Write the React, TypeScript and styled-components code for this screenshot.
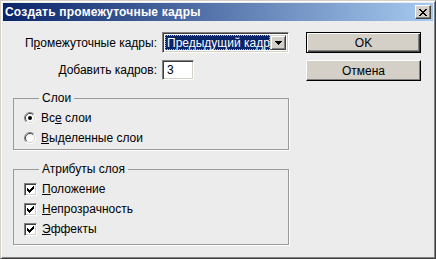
import React from "react";
import styled, { createGlobalStyle } from "styled-components";

const GlobalStyle = createGlobalStyle`
  html, body {
    margin: 0;
    padding: 0;
    background: #ececec;
  }
  body {
    font-family: "Liberation Sans", Arial, sans-serif;
    font-size: 12px;
    color: #000;
  }
`;

const Window = styled.div`
  box-sizing: border-box;
  width: 436px;
  height: 259px;
  display: flex;
  flex-direction: column;
  padding: 2px;
  background: #ececec;
  border-top: 1px solid #d4d0c8;
  border-left: 1px solid #d4d0c8;
  border-right: 1px solid #404040;
  border-bottom: 1px solid #404040;
  box-shadow: inset 1px 1px 0 #ffffff, inset -1px -1px 0 #808080;
`;

const TitleBar = styled.div`
  height: 18px;
  display: flex;
  align-items: center;
  justify-content: space-between;
  padding: 0 2px 0 2px;
  background: linear-gradient(to right, #0a246a, #a6caf0);
`;

const Title = styled.span`
  color: #fff;
  font-weight: bold;
  font-size: 12px;
  letter-spacing: 0.2px;
`;

const CloseButton = styled.div`
  box-sizing: border-box;
  width: 16px;
  height: 14px;
  display: flex;
  align-items: center;
  justify-content: center;
  background: #d4d0c8;
  border-top: 1px solid #fff;
  border-left: 1px solid #fff;
  border-right: 1px solid #404040;
  border-bottom: 1px solid #404040;
  box-shadow: inset -1px -1px 0 #808080;
`;

const Body = styled.div`
  flex: 1;
  display: flex;
  gap: 17px;
  padding: 11px 0 0 10px;
`;

const LeftColumn = styled.div`
  width: 276px;
  display: flex;
  flex-direction: column;
`;

const RightColumn = styled.div`
  display: flex;
  flex-direction: column;
  gap: 7px;
`;

const FieldRow = styled.div<{ $top: number }>`
  display: grid;
  grid-template-columns: 144px auto;
  column-gap: 5px;
  align-items: center;
  margin-top: ${({ $top }) => $top}px;
`;

const FieldLabel = styled.label`
  text-align: right;
  white-space: nowrap;
`;

const Key = styled.span`
  text-decoration: underline;
`;

const Sunken = styled.div<{ $w: number; $h: number }>`
  box-sizing: border-box;
  width: ${({ $w }) => $w}px;
  height: ${({ $h }) => $h}px;
  background: #fff;
  border-top: 1px solid #808080;
  border-left: 1px solid #808080;
  border-right: 1px solid #fff;
  border-bottom: 1px solid #fff;
  box-shadow: inset 1px 1px 0 #404040, inset -1px -1px 0 #d4d0c8;
  display: flex;
  align-items: center;
  padding: 2px;
`;

const SelectedValue = styled.div`
  flex: 1;
  height: 100%;
  box-sizing: border-box;
  background: #0a246a;
  color: #fff;
  padding-left: 2px;
  white-space: nowrap;
  overflow: hidden;
  display: flex;
  align-items: center;
  outline: 1px dotted #c9b46a;
  outline-offset: -1px;
`;

const ArrowButton = styled.div`
  box-sizing: border-box;
  width: 16px;
  height: 100%;
  display: flex;
  align-items: center;
  justify-content: center;
  background: #d4d0c8;
  border-top: 1px solid #d4d0c8;
  border-left: 1px solid #d4d0c8;
  border-right: 1px solid #404040;
  border-bottom: 1px solid #404040;
  box-shadow: inset 1px 1px 0 #fff, inset -1px -1px 0 #808080;
`;

const InputText = styled.span`
  padding-left: 2px;
`;

const Button = styled.div<{ $default?: boolean }>`
  box-sizing: border-box;
  width: 115px;
  height: 21px;
  display: flex;
  align-items: center;
  justify-content: center;
  background: #d4d0c8;
  border-top: 1px solid ${({ $default }) => ($default ? "#000" : "#fff")};
  border-left: 1px solid ${({ $default }) => ($default ? "#000" : "#fff")};
  border-right: 1px solid #000;
  border-bottom: 1px solid #000;
  box-shadow: ${({ $default }) =>
    $default
      ? "inset 1px 1px 0 #fff, inset -1px -1px 0 #404040, inset -2px -2px 0 #808080"
      : "inset -1px -1px 0 #808080"};
`;

const Group = styled.fieldset<{ $top: number; $bottom: number }>`
  margin: ${({ $top }) => $top}px 0 0 0;
  padding: 5px 0 ${({ $bottom }) => $bottom}px 10px;
  border: 1px solid #999;
  box-shadow: 1px 1px 0 #fff;
`;

const Legend = styled.legend`
  margin-left: 15px;
  padding: 0 3px;
  line-height: 14px;
`;

const Option = styled.div`
  display: flex;
  align-items: center;
  gap: 5px;
  height: 16px;
  & + & {
    margin-top: 4px;
  }
`;

const CheckBox = styled.div`
  box-sizing: border-box;
  width: 13px;
  height: 13px;
  background: #fff;
  border-top: 1px solid #808080;
  border-left: 1px solid #808080;
  border-right: 1px solid #fff;
  border-bottom: 1px solid #fff;
  box-shadow: inset 1px 1px 0 #404040, inset -1px -1px 0 #d4d0c8;
  position: relative;
`;

const CheckMark = styled.svg`
  position: absolute;
  left: 1px;
  top: 1px;
`;

const CloseGlyph = () => (
  <svg width="8" height="7" viewBox="0 0 8 7" shapeRendering="crispEdges">
    <path
      fill="#000"
      d="M0 0h2v1H0zM6 0h2v1H6zM1 1h2v1H1zM5 1h2v1H5zM2 2h4v1H2zM3 3h2v1H3zM2 4h4v1H2zM1 5h2v1H1zM5 5h2v1H5zM0 6h2v1H0zM6 6h2v1H6z"
    />
  </svg>
);

const DownArrow = () => (
  <svg width="7" height="4" viewBox="0 0 7 4" shapeRendering="crispEdges">
    <path fill="#000" d="M0 0h7v1H0zM1 1h5v1H1zM2 2h3v1H2zM3 3h1v1H3z" />
  </svg>
);

const Radio = ({ checked }: { checked?: boolean }) => (
  <svg width="12" height="12" viewBox="0 0 12 12">
    <circle cx="6" cy="6" r="5.5" fill="#fff" />
    <path d="M2.1 9.9A5.5 5.5 0 0 1 9.9 2.1" fill="none" stroke="#808080" />
    <path d="M9.9 2.1A5.5 5.5 0 0 1 2.1 9.9" fill="none" stroke="#fff" />
    <path d="M2.8 9.2A4.5 4.5 0 0 1 9.2 2.8" fill="none" stroke="#404040" />
    <path d="M9.2 2.8A4.5 4.5 0 0 1 2.8 9.2" fill="none" stroke="#d4d0c8" />
    {checked && <circle cx="6" cy="6" r="2" fill="#000" />}
  </svg>
);

const Check = () => (
  <CheckBox>
    <CheckMark width="9" height="9" viewBox="0 0 9 9" shapeRendering="crispEdges">
      <path
        fill="#000"
        d="M1 3h1v3H1zM2 4h1v3H2zM3 5h1v3H3zM4 4h1v3H4zM5 3h1v3H5zM6 2h1v3H6zM7 1h1v3H7z"
      />
    </CheckMark>
  </CheckBox>
);

export default function App() {
  return (
    <>
      <GlobalStyle />
      <Window>
        <TitleBar>
          <Title>Создать промежуточные кадры</Title>
          <CloseButton>
            <CloseGlyph />
          </CloseButton>
        </TitleBar>
        <Body>
          <LeftColumn>
            <FieldRow $top={0}>
              <FieldLabel>
                П<Key>р</Key>омежуточные кадры:
              </FieldLabel>
              <Sunken $w={127} $h={21}>
                <SelectedValue>Предыдущий кадр</SelectedValue>
                <ArrowButton>
                  <DownArrow />
                </ArrowButton>
              </Sunken>
            </FieldRow>
            <FieldRow $top={7}>
              <FieldLabel>Добавить кадров:</FieldLabel>
              <Sunken $w={32} $h={20}>
                <InputText>3</InputText>
              </Sunken>
            </FieldRow>
            <Group $top={11} $bottom={3}>
              <Legend>Слои</Legend>
              <Option>
                <Radio checked />
                <span>
                  Вс<Key>е</Key> слои
                </span>
              </Option>
              <Option>
                <Radio />
                <span>
                  <Key>В</Key>ыделенные слои
                </span>
              </Option>
            </Group>
            <Group $top={12} $bottom={7}>
              <Legend>Атрибуты слоя</Legend>
              <Option>
                <Check />
                <span>
                  <Key>П</Key>оложение
                </span>
              </Option>
              <Option>
                <Check />
                <span>
                  <Key>Н</Key>епрозрачность
                </span>
              </Option>
              <Option>
                <Check />
                <span>
                  <Key>Э</Key>ффекты
                </span>
              </Option>
            </Group>
          </LeftColumn>
          <RightColumn>
            <Button $default>OK</Button>
            <Button>Отмена</Button>
          </RightColumn>
        </Body>
      </Window>
    </>
  );
}
